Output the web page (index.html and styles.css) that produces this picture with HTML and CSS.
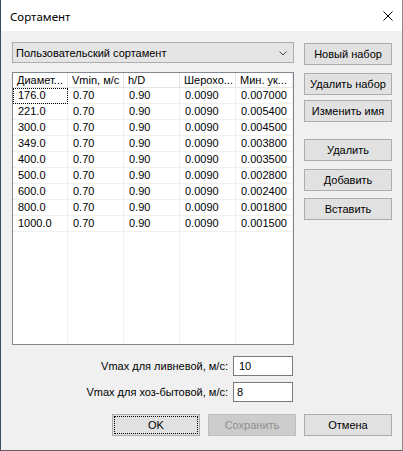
FILE: index.html
```html
<!DOCTYPE html>
<html lang="ru">
<head>
<meta charset="utf-8">
<title>Сортамент</title>
<link rel="stylesheet" href="styles.css">
</head>
<body>
<div class="window">
  <div class="titlebar">
    <span class="title">Сортамент</span>
    <svg class="close" width="10" height="10" viewBox="0 0 10 10"><path d="M0.5 0.5 L9.5 9.5 M9.5 0.5 L0.5 9.5" stroke="#000" stroke-width="1" fill="none"/></svg>
  </div>
  <div class="client">
    <div class="top">
      <div class="left-col">
        <div class="combo">
          <span>Пользовательский сортамент</span>
          <svg class="chev" width="8" height="5" viewBox="0 0 8 5"><path d="M0.5 0.5 L4 4 L7.5 0.5" stroke="#4a4a4a" stroke-width="1" fill="none"/></svg>
        </div>
        <div class="list">
          <div class="row header">
            <div class="cell">Диамет...</div>
            <div class="cell">Vmin, м/с</div>
            <div class="cell">h/D</div>
            <div class="cell">Шерохо...</div>
            <div class="cell">Мин. ук...</div>
          </div>
          <div class="row data"><div class="cell focus">176.0</div><div class="cell">0.70</div><div class="cell">0.90</div><div class="cell">0.0090</div><div class="cell">0.007000</div></div>
          <div class="row data"><div class="cell">221.0</div><div class="cell">0.70</div><div class="cell">0.90</div><div class="cell">0.0090</div><div class="cell">0.005400</div></div>
          <div class="row data"><div class="cell">300.0</div><div class="cell">0.70</div><div class="cell">0.90</div><div class="cell">0.0090</div><div class="cell">0.004500</div></div>
          <div class="row data"><div class="cell">349.0</div><div class="cell">0.70</div><div class="cell">0.90</div><div class="cell">0.0090</div><div class="cell">0.003800</div></div>
          <div class="row data"><div class="cell">400.0</div><div class="cell">0.70</div><div class="cell">0.90</div><div class="cell">0.0090</div><div class="cell">0.003500</div></div>
          <div class="row data"><div class="cell">500.0</div><div class="cell">0.70</div><div class="cell">0.90</div><div class="cell">0.0090</div><div class="cell">0.002800</div></div>
          <div class="row data"><div class="cell">600.0</div><div class="cell">0.70</div><div class="cell">0.90</div><div class="cell">0.0090</div><div class="cell">0.002400</div></div>
          <div class="row data"><div class="cell">800.0</div><div class="cell">0.70</div><div class="cell">0.90</div><div class="cell">0.0090</div><div class="cell">0.001800</div></div>
          <div class="row data"><div class="cell">1000.0</div><div class="cell">0.70</div><div class="cell">0.90</div><div class="cell">0.0090</div><div class="cell">0.001500</div></div>
          <div class="row filler"><div class="cell"></div><div class="cell"></div><div class="cell"></div><div class="cell"></div><div class="cell"></div></div>
        </div>
      </div>
      <div class="right-col">
        <div class="btn b1">Новый набор</div>
        <div class="btn b2">Удалить набор</div>
        <div class="btn b3">Изменить имя</div>
        <div class="btn b4">Удалить</div>
        <div class="btn b5">Добавить</div>
        <div class="btn b6">Вставить</div>
      </div>
    </div>
    <div class="fields">
      <div class="field">
        <span class="field-label">Vmax для ливневой, м/с:</span>
        <div class="field-input">10</div>
      </div>
      <div class="field field-second">
        <span class="field-label">Vmax для хоз-бытовой, м/с:</span>
        <div class="field-input tight">8</div>
      </div>
    </div>
    <div class="actions">
      <div class="btn default">OK</div>
      <div class="btn disabled">Сохранить</div>
      <div class="btn">Отмена</div>
    </div>
  </div>
</div>
</body>
</html>
```

FILE: styles.css
```css
html, body {
  margin: 0;
  padding: 0;
  background: #f0f0f0;
}
.window {
  width: 403px;
  height: 451px;
  box-sizing: border-box;
  border-left: 1px solid #3d4a66;
  border-right: 1px solid #8a8a8a;
  border-bottom: 1px solid #5f5f5f;
  display: flex;
  flex-direction: column;
  font-family: "Liberation Sans", Arial, sans-serif;
  font-size: 11px;
  color: #000;
}
.titlebar {
  height: 31px;
  flex: none;
  background: #fff;
  display: flex;
  align-items: center;
  justify-content: space-between;
  padding: 0 9px 0 9px;
}
.title {
  font-family: "Noto Sans", "Liberation Sans", sans-serif;
  font-size: 11.5px;
  margin-top: 1px;
}
.close {
  display: block;
  margin-top: 1px;
}
.client {
  flex: 1;
  background: #f0f0f0;
  padding: 11px 10px 0 11px;
  display: flex;
  flex-direction: column;
}
.top {
  display: flex;
  gap: 10px;
  align-items: flex-start;
}
.left-col {
  width: 282px;
  display: flex;
  flex-direction: column;
}
.combo {
  height: 21px;
  box-sizing: border-box;
  border: 1px solid #adadad;
  background: #e5e5e5;
  display: flex;
  align-items: center;
  justify-content: space-between;
  padding: 0 6px 0 3px;
}
.chev {
  display: block;
  margin-top: 1px;
}
.list {
  margin-top: 9px;
  height: 273px;
  box-sizing: border-box;
  border: 1px solid #828790;
  background: #fff;
  display: flex;
  flex-direction: column;
}
.row {
  display: grid;
  grid-template-columns: 55px 56px 56px 56px 57px;
  flex: none;
}
.cell {
  box-sizing: border-box;
  border-right: 1px solid #f0f0f0;
  padding-left: 5px;
  white-space: nowrap;
  overflow: hidden;
}
.header .cell {
  height: 15px;
  line-height: 14px;
  border-right: 1px solid #e5e5e5;
  border-bottom: 1px solid #e5e5e5;
  padding-left: 4px;
}
.data .cell {
  height: 16px;
  line-height: 15px;
  border-bottom: 1px solid #f0f0f0;
}
.data .cell.focus {
  outline: 1px dotted #000;
  outline-offset: -1px;
}
.filler {
  flex: 1;
}
.right-col {
  width: 88px;
  display: flex;
  flex-direction: column;
}
.btn {
  height: 22px;
  box-sizing: border-box;
  border: 1px solid #adadad;
  background: #e1e1e1;
  display: flex;
  align-items: center;
  justify-content: center;
  white-space: nowrap;
}
.b1 { margin-top: 1px; }
.b2 { margin-top: 8px; }
.b3 { margin-top: 5px; }
.b4 { margin-top: 17px; }
.b5 { margin-top: 8px; }
.b6 { margin-top: 7px; }
.fields {
  width: 282px;
  margin-top: 11px;
  display: flex;
  flex-direction: column;
}
.field {
  display: flex;
  justify-content: flex-end;
  align-items: center;
  padding-right: 1px;
}
.field-second {
  margin-top: 6px;
}
.field-label {
  margin-right: 5px;
}
.field-input {
  width: 60px;
  height: 20px;
  box-sizing: border-box;
  border: 1px solid #7a7a7a;
  background: #fff;
  padding-left: 5px;
  line-height: 18px;
}
.field-input.tight {
  padding-left: 3px;
}
.actions {
  margin-top: 12px;
  display: flex;
  justify-content: flex-end;
  gap: 8px;
}
.actions .btn {
  width: 88px;
}
.btn.default {
  outline: 1px dotted #000;
  outline-offset: -3px;
}
.btn.disabled {
  background: #cccccc;
  border-color: #bfbfbf;
  color: #8f8f8f;
}
```
